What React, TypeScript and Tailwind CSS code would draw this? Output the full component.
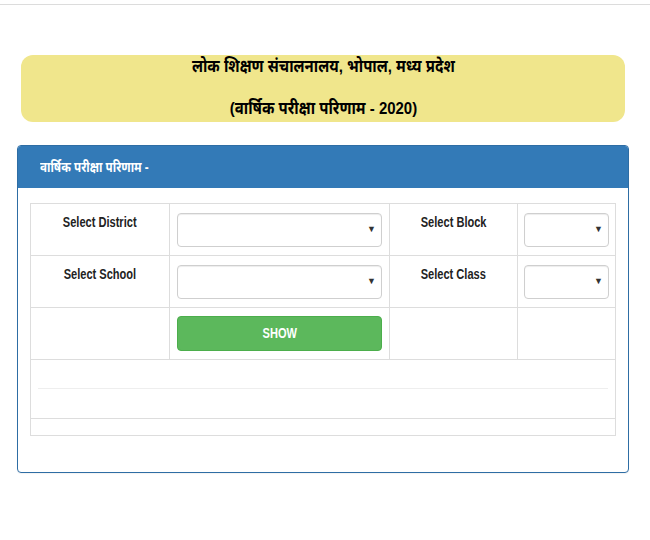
import React from 'react';

const sans = { fontFamily: '"Liberation Sans", "Noto Sans", sans-serif' };

// the original page uses a condensed face; squeeze Liberation Sans to match widths
const Narrow = ({ children }: { children: React.ReactNode }) => (
  <span className="inline-block scale-x-[0.79]">{children}</span>
);

const SelectBox = ({ wide }: { wide?: boolean }) => (
  <div
    className={`relative h-[34px] rounded-[4px] border border-[#cfcfcf] bg-white shadow-[inset_0_1px_1px_rgba(0,0,0,0.075)] ${
      wide ? 'w-[205px]' : 'w-[85px]'
    }`}
  >
    <span className="absolute right-[5px] top-[11px] text-[9px] leading-none text-[#333]">▼</span>
  </div>
);

const App = () => {
  return (
    <div className="w-[650px] h-[540px] bg-white" style={sans}>
      <div className="h-[4px]" />
      <div className="h-px bg-[#dcdcdc]" />

      <div className="pt-[50px] pl-[21px] pr-[25px]">
        <div className="h-[67px] rounded-[12px] bg-[#f0e68c] flex flex-col items-center text-black font-bold text-[17px]">
          <div className="mt-[2px] leading-[20px]">
            <span className="inline-block scale-x-[0.88]">लोक शिक्षण संचालनालय, भोपाल, मध्य प्रदेश</span>
          </div>
          <div className="mt-[22px] leading-[20px]">
            <span className="inline-block scale-x-[0.88]">(वार्षिक परीक्षा परिणाम - 2020)</span>
          </div>
        </div>
      </div>

      <div className="mt-[23px] ml-[17px] w-[612px] h-[328px] border border-[#2e6da4] rounded-[4px] shadow-[0_1px_1px_rgba(0,0,0,0.05)]">
        <div className="h-[42px] bg-[#337ab7] rounded-t-[3px] flex items-center pl-[22px] text-white font-bold text-[14px]">
          <span className="inline-block scale-x-[0.83] origin-left">वार्षिक परीक्षा परिणाम -</span>
        </div>
        <div className="pt-[15px] pl-[12px]">
          <table className="w-[586px] border-collapse border border-[#dddddd] text-[14px] text-[#222] font-bold">
            <tbody>
              <tr className="h-[52px]">
                <td className="w-[139px] border border-[#dddddd] align-top text-center pt-[8px]">
                  <Narrow>Select District</Narrow>
                </td>
                <td className="w-[219px] border border-[#dddddd] px-[7px]">
                  <SelectBox wide />
                </td>
                <td className="w-[128px] border border-[#dddddd] align-top text-center pt-[8px]">
                  <Narrow>Select Block</Narrow>
                </td>
                <td className="border border-[#dddddd] px-[6px]">
                  <SelectBox />
                </td>
              </tr>
              <tr className="h-[52px]">
                <td className="border border-[#dddddd] align-top text-center pt-[8px]">
                  <Narrow>Select School</Narrow>
                </td>
                <td className="border border-[#dddddd] px-[7px]">
                  <SelectBox wide />
                </td>
                <td className="border border-[#dddddd] align-top text-center pt-[8px]">
                  <Narrow>Select Class</Narrow>
                </td>
                <td className="border border-[#dddddd] px-[6px]">
                  <SelectBox />
                </td>
              </tr>
              <tr className="h-[52px]">
                <td className="border border-[#dddddd]" />
                <td className="border border-[#dddddd] px-[7px]">
                  <button
                    type="button"
                    className="w-[205px] h-[35px] rounded-[4px] bg-[#5cb85c] border border-[#4cae4c] text-white font-bold text-[14px]"
                  >
                    <Narrow>SHOW</Narrow>
                  </button>
                </td>
                <td className="border border-[#dddddd]" />
                <td className="border border-[#dddddd]" />
              </tr>
              <tr className="h-[59px]">
                <td colSpan={4} className="border border-[#dddddd] px-[7px] pt-[28px] align-top">
                  <div className="h-px bg-[#eeeeee]" />
                </td>
              </tr>
              <tr className="h-[17px]">
                <td colSpan={4} className="border border-[#dddddd]" />
              </tr>
            </tbody>
          </table>
        </div>
      </div>
    </div>
  );
};

export default App;
